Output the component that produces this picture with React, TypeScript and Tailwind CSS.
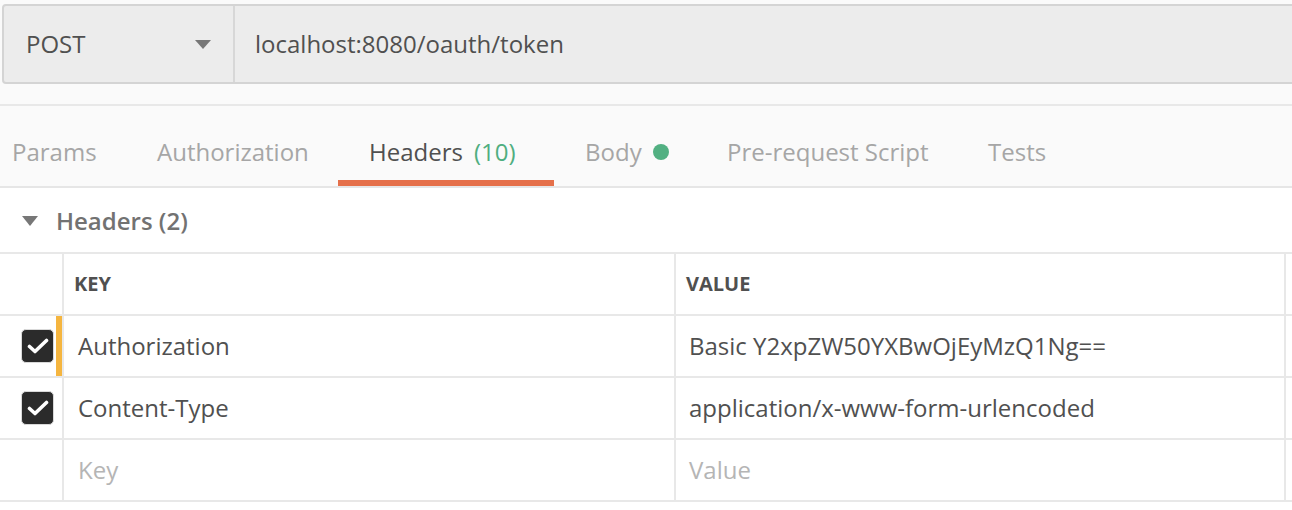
import { useState } from 'react';

type Tab = { label: string; width: string; pad: string };

const tabs: Tab[] = [
    { label: 'Params', width: 'w-[126px]', pad: 'pl-[12px]' },
    { label: 'Authorization', width: 'w-[212px]', pad: 'pl-[31px]' },
    { label: 'Headers', width: 'w-[216px]', pad: 'pl-[31px]' },
    { label: 'Body', width: 'w-[142px]', pad: 'pl-[31px]' },
    { label: 'Pre-request Script', width: 'w-[261px]', pad: 'pl-[31px]' },
    { label: 'Tests', width: 'w-[140px]', pad: 'pl-[31px]' },
];

const rows = [
    { key: 'Authorization', value: 'Basic Y2xpZW50YXBwOjEyMzQ1Ng==', checked: true, edited: true },
    { key: 'Content-Type', value: 'application/x-www-form-urlencoded', checked: true, edited: false },
];

function Checkbox() {
    return (
        <div className="w-[33px] h-[34px] rounded-[5px] bg-[#2b2b2b] border border-[#d9d9d9] flex items-center justify-center">
            <svg width="22" height="18" viewBox="0 0 22 18" fill="none">
                <path d="M2.5 9.5 L8 14.5 L19.5 3.5" stroke="#ffffff" strokeWidth="3.6" strokeLinecap="round" strokeLinejoin="round" />
            </svg>
        </div>
    );
}

function App() {
    const [activeTab, setActiveTab] = useState('Headers');

    return (
        <div className="w-[1292px] h-[510px] overflow-hidden bg-white text-[#505050] font-['Open_Sans',_'Liberation_Sans',_sans-serif]">
            {/* Request bar */}
            <div className="bg-[#fafafa] pt-[4px] pl-[2px] border-b-2 border-[#e8e8e8]">
                <div className="h-[80px] w-[1300px] flex bg-[#ececec] border-2 border-[#d4d4d4] rounded-l-[4px]">
                    <div className="w-[231px] flex items-center justify-between pl-[22px] pr-[22px] border-r-2 border-[#d7d7d7]">
                        <span className="text-[24px] text-[#505050]">POST</span>
                        <svg width="16" height="9" viewBox="0 0 16 9">
                            <path d="M0 0 H16 L8 9 Z" fill="#777777" />
                        </svg>
                    </div>
                    <div className="flex-1 flex items-center pl-[20px] text-[24px] text-[#505050]">
                        localhost:8080/oauth/token
                    </div>
                </div>
                <div className="h-[20px]" />
            </div>

            {/* Tabs */}
            <div className="h-[82px] bg-[#fafafa] border-b-2 border-[#e6e6e6] flex">
                {tabs.map((t) => {
                    const active = t.label === activeTab;
                    return (
                        <div
                            key={t.label}
                            onClick={() => setActiveTab(t.label)}
                            className={`${t.width} ${t.pad} shrink-0 h-full flex flex-col cursor-pointer`}
                        >
                            <div className={`flex-1 flex items-center gap-[11px] text-[24px] pt-[18px] ${active ? 'text-[#505050]' : 'text-[#a6a6a6]'}`}>
                                <span>{t.label}</span>
                                {t.label === 'Headers' && <span className="text-[#4fae80]">(10)</span>}
                                {t.label === 'Body' && <span className="w-[16px] h-[16px] rounded-full bg-[#52b082]" />}
                            </div>
                            <div className={`h-[6px] ${active ? 'bg-[#e5704a] -ml-[31px]' : ''}`} />
                        </div>
                    );
                })}
            </div>

            {/* Section title */}
            <div className="h-[64px] flex items-center pl-[22px] gap-[18px] pt-[1px]">
                <svg width="16" height="10" viewBox="0 0 16 10">
                    <path d="M0 0 H16 L8 10 Z" fill="#777777" />
                </svg>
                <span className="text-[24px] font-semibold text-[#727272]">Headers (2)</span>
            </div>

            {/* Table */}
            <div className="border-t-2 border-[#e8e8e8]">
                <div className="h-[62px] flex border-b-2 border-[#e8e8e8]">
                    <div className="w-[64px] shrink-0 border-r-2 border-[#e8e8e8]" />
                    <div className="w-[612px] shrink-0 border-r-2 border-[#e8e8e8] flex items-center pl-[10px] text-[20px] font-bold text-[#505050]">KEY</div>
                    <div className="w-[610px] shrink-0 border-r-2 border-[#e8e8e8] flex items-center pl-[10px] text-[20px] font-bold text-[#505050]">VALUE</div>
                </div>
                {rows.map((r) => (
                    <div key={r.key} className="h-[62px] flex border-b-2 border-[#e8e8e8]">
                        <div className="w-[62px] shrink-0 flex items-center">
                            <div className="w-[56px] flex items-center pl-[21px]">
                                {r.checked && <Checkbox />}
                            </div>
                            <div className={`w-[6px] h-full ${r.edited ? 'bg-[#f5b53f]' : ''}`} />
                        </div>
                        <div className="w-[614px] shrink-0 border-l-2 border-r-2 border-[#e8e8e8] flex items-center pl-[14px] text-[24px] text-[#505050]">{r.key}</div>
                        <div className="w-[610px] shrink-0 border-r-2 border-[#e8e8e8] flex items-center pl-[13px] text-[24px] text-[#505050]">{r.value}</div>
                    </div>
                ))}
                <div className="h-[62px] flex border-b-2 border-[#e8e8e8]">
                    <div className="w-[62px] shrink-0" />
                    <div className="w-[614px] shrink-0 border-l-2 border-r-2 border-[#e8e8e8] flex items-center pl-[14px] text-[24px] text-[#b5b5b5]">Key</div>
                    <div className="w-[610px] shrink-0 border-r-2 border-[#e8e8e8] flex items-center pl-[13px] text-[24px] text-[#b5b5b5]">Value</div>
                </div>
            </div>
        </div>
    );
}

export default App;
